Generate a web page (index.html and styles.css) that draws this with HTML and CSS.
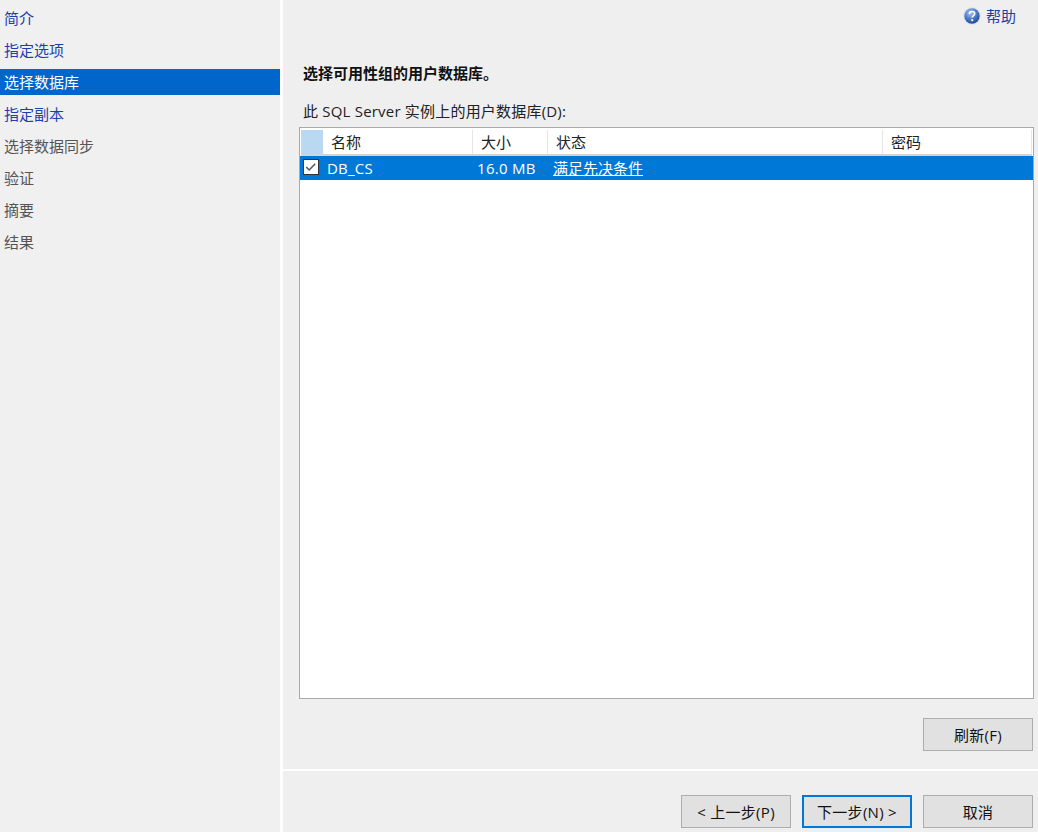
FILE: index.html
```html
<!DOCTYPE html>
<html lang="zh-CN">
<head>
<meta charset="utf-8">
<title>选择数据库</title>
<link rel="stylesheet" href="styles.css">
</head>
<body>
<div class="app">
  <nav class="side">
    <a class="item link">简介</a>
    <a class="item link">指定选项</a>
    <a class="item active">选择数据库</a>
    <a class="item link">指定副本</a>
    <a class="item muted">选择数据同步</a>
    <a class="item muted">验证</a>
    <a class="item muted">摘要</a>
    <a class="item muted">结果</a>
  </nav>
  <main class="main">
    <div class="content">
      <div class="help">
        <svg class="help-icon" width="18" height="18" viewBox="0 0 18 18">
          <defs>
            <radialGradient id="hg" cx="40%" cy="30%" r="75%">
              <stop offset="0" stop-color="#a9c6f0"/>
              <stop offset="0.55" stop-color="#4a78c8"/>
              <stop offset="1" stop-color="#1d4596"/>
            </radialGradient>
          </defs>
          <circle cx="9" cy="9" r="9" fill="#dfe4ee"/>
          <circle cx="9" cy="9" r="7.7" fill="url(#hg)"/>
          <path d="M6.4 7c0-1.6 1.2-2.5 2.7-2.5s2.6.9 2.6 2.2c0 2-2.5 1.9-2.5 3.8" fill="none" stroke="#fff" stroke-width="1.6"/>
          <circle cx="9.2" cy="13.2" r="1.1" fill="#fff"/>
        </svg>
        <span class="help-text">帮助</span>
      </div>
      <h1 class="title">选择可用性组的用户数据库。</h1>
      <div class="label">此 SQL Server 实例上的用户数据库(D):</div>
      <div class="table">
        <div class="row head">
          <div class="cell c0 corner"></div>
          <div class="cell c1">名称</div>
          <div class="cell c2">大小</div>
          <div class="cell c3">状态</div>
          <div class="cell c4">密码</div>
        </div>
        <div class="row selected">
          <div class="cell c0">
            <svg class="check" width="16" height="16" viewBox="0 0 16 16">
              <rect x="0.5" y="0.5" width="15" height="15" fill="#fff" stroke="#333"/>
              <path d="M3.2 8l3 3 6-6.2" fill="none" stroke="#555" stroke-width="1.5"/>
            </svg>
          </div>
          <div class="cell c1 name">DB_CS</div>
          <div class="cell c2 size">16.0 MB</div>
          <div class="cell c3 status">满足先决条件</div>
          <div class="cell c4"></div>
        </div>
      </div>
      <div class="refresh-row"><button class="btn">刷新(F)</button></div>
    </div>
    <div class="footer">
      <button class="btn">&lt; 上一步(P)</button>
      <button class="btn primary">下一步(N) &gt;</button>
      <button class="btn">取消</button>
    </div>
  </main>
</div>
</body>
</html>
```
FILE: styles.css
```css
* { box-sizing: border-box; }
html, body { margin: 0; height: 100%; }
body {
  background: #efefef;
  font-family: "Open Sans", "Noto Sans CJK SC", sans-serif;
  font-size: 15px;
  color: #111;
  overflow: hidden;
}
.app { display: flex; height: 832px; }
.side {
  width: 283px;
  flex: none;
  background: #f0f0f0;
  border-right: 3px solid #fff;
  padding-top: 5px;
  display: flex;
  flex-direction: column;
  gap: 6px;
}
.item {
  height: 26px;
  line-height: 26px;
  padding-left: 4px;
}
.link { color: #1c3fb0; }
.muted { color: #555; }
.active { background: #0066cc; color: #fff; }
.main { flex: 1; display: flex; flex-direction: column; }
.content { height: 769px; padding: 0 4px 0 16px; }
.help {
  display: flex;
  align-items: center;
  justify-content: flex-end;
  gap: 5px;
  height: 32px;
  padding-right: 18px;
  color: #1c3fb0;
}
.help-text { line-height: 32px; }
.title {
  margin: 31px 0 0 4px;
  height: 20px;
  line-height: 20px;
  font-size: 15px;
  font-weight: 700;
  color: #111;
}
.label { margin: 18px 0 0 4px; height: 20px; line-height: 20px; color: #222; letter-spacing: 0.2px; }
.table {
  margin-top: 6px;
  height: 572px;
  width: 735px;
  background: #fff;
  border: 1px solid #a9a9a9;
  padding: 2px 1px 0 1px;
}
.row { display: flex; }
.head { height: 26px; border-bottom: 2px solid #d4d4d4; color: #222; }
.selected { height: 24px; margin: 0 -1px; background: #0078d7; color: #fff; }
.cell { line-height: 24px; padding-left: 8px; }
.head .cell { border-right: 1px solid #e6e6e6; }
.c0 { width: 22px; padding: 0; flex: none; }
.selected .c0 { width: 23px; }
.c1 { width: 150px; flex: none; }
.c2 { width: 75px; flex: none; }
.c3 { width: 335px; flex: none; }
.c4 { flex: 1; }
.corner { background: #b9d9f2; border-right: 0 !important; }
.name { padding-left: 4px; letter-spacing: 0.2px; }
.size { padding-left: 4px; letter-spacing: 0.3px; }
.status { padding-left: 5px; text-decoration: underline; }
.check { display: block; margin: 3px 0 0 3px; }
.refresh-row { display: flex; justify-content: flex-end; margin-top: 19px; padding-right: 1px; }
.btn {
  width: 110px;
  height: 33px;
  padding: 0;
  background: #e1e1e1;
  border: 1px solid #adadad;
  border-radius: 0;
  font: inherit;
  letter-spacing: 0.3px;
  color: #111;
}
.primary { border: 2px solid #0078d7; }
.footer {
  flex: 1;
  border-top: 2px solid #fff;
  display: flex;
  justify-content: flex-end;
  gap: 11px;
  padding: 24px 5px 0 0;
}
```
